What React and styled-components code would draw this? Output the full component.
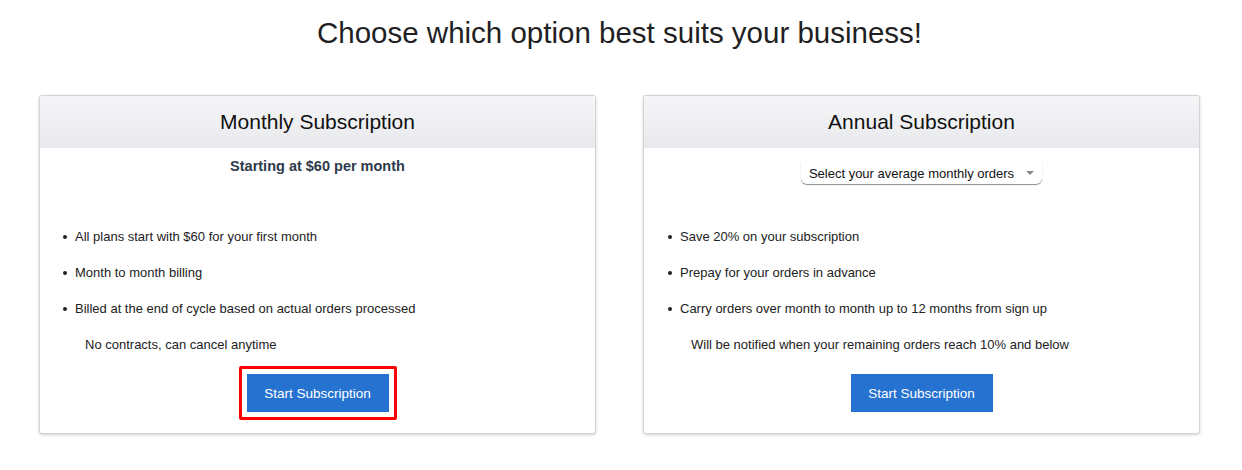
import React from 'react';
import styled, { createGlobalStyle } from 'styled-components';

const GlobalStyle = createGlobalStyle`
  body {
    margin: 0;
    background: #fff;
    font-family: 'Liberation Sans', Arial, sans-serif;
    color: #222;
  }
`;

const Page = styled('div')`
  width: 1242px;
  height: 470px;
  padding: 16px 42px 0 39px;
  box-sizing: border-box;
`;

const Heading = styled('h1')`
  margin: 0 0 45px;
  text-align: center;
  font-size: 29.5px;
  font-weight: 400;
  line-height: 34px;
  color: #1f1f24;
`;

const Cards = styled('div')`
  display: grid;
  grid-template-columns: 557px 557px;
  column-gap: 47px;
`;

const Card = styled('div')`
  box-sizing: border-box;
  height: 339px;
  border: 1px solid #d4d4d6;
  border-radius: 3px;
  box-shadow: 0 1px 3px rgba(0, 0, 0, 0.18);
  display: flex;
  flex-direction: column;
  overflow: hidden;
  background: #fff;
`;

const CardHeader = styled('div')`
  height: 52px;
  display: flex;
  align-items: center;
  justify-content: center;
  background: linear-gradient(#f6f6f8, #e8e9ec);
  font-size: 21px;
  color: #111;
`;

const CardBody = styled('div')`
  flex: 1;
  display: flex;
  flex-direction: column;
  align-items: center;
  padding-top: ${(p) => p.$top}px;
`;

const Price = styled('div')`
  font-size: 14.5px;
  font-weight: 600;
  color: #2d3a4b;
  line-height: 20px;
`;

const Select = styled('div')`
  display: flex;
  align-items: center;
  gap: 12px;
  height: 22px;
  padding: 0 8px;
  font-size: 13px;
  color: #111;
  border-radius: 0 0 6px 6px;
  box-shadow: 0 1px 1px rgba(0, 0, 0, 0.45);
`;

const Caret = styled('span')`
  width: 0;
  height: 0;
  border-left: 4px solid transparent;
  border-right: 4px solid transparent;
  border-top: 4px solid #888;
`;

const List = styled('ul')`
  align-self: stretch;
  list-style: none;
  margin: ${(p) => p.$top}px 0 0;
  padding: 0 0 0 ${(p) => p.$indent}px;
`;

const Item = styled('li')`
  position: relative;
  font-size: 13px;
  line-height: 18px;
  height: ${(p) => (p.$plain ? 25 : 36)}px;
  padding-left: ${(p) => (p.$plain ? p.$note : 12)}px;
  &::before {
    content: ${(p) => (p.$plain ? 'none' : "''")};
    position: absolute;
    left: 0;
    top: 7px;
    width: 4px;
    height: 4px;
    border-radius: 50%;
    background: #222;
  }
`;

const Outline = styled('div')`
  margin-top: 5px;
  padding: 5px;
  border: 3px solid ${(p) => (p.$active ? '#f00' : 'transparent')};
  border-radius: 2px;
`;

const Button = styled('button')`
  width: 142px;
  height: 38px;
  border: none;
  background: #2672d0;
  color: #fff;
  font-family: inherit;
  font-size: 13.5px;
  cursor: pointer;
`;

const plans = [
  {
    title: 'Monthly Subscription',
    top: 8,
    listTop: 52,
    indent: 23,
    note: 22,
    items: [
      'All plans start with $60 for your first month',
      'Month to month billing',
      'Billed at the end of cycle based on actual orders processed',
    ],
    footnote: 'No contracts, can cancel anytime',
    active: true,
  },
  {
    title: 'Annual Subscription',
    top: 14,
    listTop: 44,
    indent: 24,
    note: 23,
    select: true,
    items: [
      'Save 20% on your subscription',
      'Prepay for your orders in advance',
      'Carry orders over month to month up to 12 months from sign up',
    ],
    footnote: 'Will be notified when your remaining orders reach 10% and below',
  },
];

const App = () => (
  <Page>
    <GlobalStyle />
    <Heading>Choose which option best suits your business!</Heading>
    <Cards>
      {plans.map((plan) => (
        <Card key={plan.title}>
          <CardHeader>{plan.title}</CardHeader>
          <CardBody $top={plan.top}>
            {plan.select ? (
              <Select>
                Select your average monthly orders
                <Caret />
              </Select>
            ) : (
              <Price>Starting at $60 per month</Price>
            )}
            <List $top={plan.listTop} $indent={plan.indent}>
              {plan.items.map((item) => (
                <Item key={item}>{item}</Item>
              ))}
              <Item $plain $note={plan.note}>{plan.footnote}</Item>
            </List>
            <Outline $active={plan.active}>
              <Button type="button">Start Subscription</Button>
            </Outline>
          </CardBody>
        </Card>
      ))}
    </Cards>
  </Page>
);

export default App;
